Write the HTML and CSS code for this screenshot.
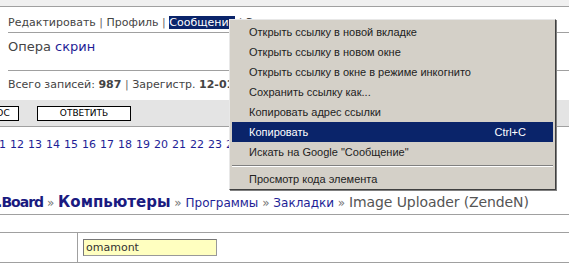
FILE: index.html
```html
<!DOCTYPE html>
<html lang="ru">
<head>
  <meta charset="UTF-8" />
  <title>Image Uploader (ZendeN)</title>
  <link rel="stylesheet" href="styles.css">
</head>
<body>
  <div class="topbar"></div>

  <div class="nav">
    <a href="#">Редактировать</a> <span class="sep">|</span>
    <a href="#">Профиль</a> <span class="sep">|</span>
    <a href="#" class="selected">Сообщения</a> <span class="sep">|</span>
    <a href="#">Закладки</a>
  </div>

  <div class="title">Опера <a href="#">скрин</a></div>

  <div class="stats">Всего записей: <b>987</b> <span class="sep">|</span> Зарегистр. <b>12-01-2008</b></div>

  <div class="toolbar">
    <button class="btn btn-new">НОВЫЙ ВОПРОС</button>
    <button class="btn btn-reply">ОТВЕТИТЬ</button>
  </div>

  <div class="pages">
    <a href="#">11</a> <a href="#">12</a> <a href="#">13</a> <a href="#">14</a> <a href="#">15</a>
    <a href="#">16</a> <a href="#">17</a> <a href="#">18</a> <a href="#">19</a> <a href="#">20</a>
    <a href="#">21</a> <a href="#">22</a> <a href="#">23</a> <a href="#">24</a>
  </div>

  <div class="crumbs">
    <a href="#" class="strong home">Forum.Board</a> <span class="raquo">»</span>
    <a href="#" class="strong">Компьютеры</a> <span class="raquo">»</span>
    <a href="#">Программы</a> <span class="raquo">»</span>
    <a href="#">Закладки</a> <span class="raquo">»</span>
    <span class="current">Image Uploader (ZendeN)</span>
  </div>

  <div class="spacer"></div>

  <div class="form-row">
    <div class="label-cell"></div>
    <div class="input-cell"><input type="text" value="omamont"></div>
  </div>

  <!-- Контекстное меню поверх страницы -->
  <ul class="context-menu">
    <li>Открыть ссылку в новой вкладке</li>
    <li>Открыть ссылку в новом окне</li>
    <li>Открыть ссылку в окне в режиме инкогнито</li>
    <li>Сохранить ссылку как...</li>
    <li>Копировать адрес ссылки</li>
    <li class="active">Копировать <span class="hotkey">Ctrl+C</span></li>
    <li>Искать на Google "Сообщение"</li>
    <li class="divider"></li>
    <li class="last">Просмотр кода элемента</li>
  </ul>
</body>
</html>
```

FILE: styles.css
```css
body {
  margin: 0;
  font-family: "DejaVu Sans", Verdana, sans-serif;
  font-size: 11px;
  color: #444;
  background: white;
  overflow: hidden;
  width: 569px;
  height: 264px;
  position: relative;
}

a {
  color: #1e1e96;
  text-decoration: none;
}

.sep {
  color: #666;
}

/* Верхняя полоса браузера */
.topbar {
  height: 6px;
  background: #f0f0f0;
  border-bottom: 1px solid #a0a0a0;
}

.nav {
  height: 25px;
  line-height: 31px;
  margin-left: 8px;
  border-bottom: 1px solid #a0a0a0;
  white-space: nowrap;
}

.nav a {
  color: #444;
}

.nav .selected {
  background: #0a246a;
  color: white;
}

.title {
  height: 37px;
  line-height: 27px;
  margin-left: 8px;
  font-size: 13px;
  border-bottom: 1px solid #a0a0a0;
}

.stats {
  height: 29px;
  line-height: 28px;
  margin-left: 8px;
  white-space: nowrap;
}

.toolbar {
  height: 26px;
  background: #e4e4e4;
  border-bottom: 1px solid #a0a0a0;
  display: flex;
  align-items: center;
  gap: 18px;
  margin-left: -76px;
}

.btn {
  height: 15px;
  padding: 0;
  border: 1px solid black;
  background: white;
  font-family: "DejaVu Sans", Verdana, sans-serif;
  font-size: 9px;
  color: black;
}

.btn-new {
  width: 95px;
}

.btn-reply {
  width: 94px;
}

.pages {
  height: 62px;
  line-height: 36px;
  margin-left: -8px;
  word-spacing: 0.5px;
  white-space: nowrap;
}

.crumbs {
  height: 25px;
  line-height: 27px;
  font-size: 12px;
  margin-left: -48px;
  white-space: nowrap;
  border-bottom: 1px solid #a0a0a0;
}

.crumbs .strong {
  font-size: 15px;
  font-weight: bold;
  color: #1a1a80;
}

.crumbs .home {
  font-size: 14px;
  letter-spacing: -1px;
}

.crumbs .raquo {
  color: #777;
}

.crumbs .current {
  font-size: 14px;
  letter-spacing: -0.1px;
  color: #555;
}

.spacer {
  height: 17px;
  border-bottom: 1px solid #a0a0a0;
}

.form-row {
  display: flex;
  height: 29px;
  border-bottom: 1px solid #a0a0a0;
}

.label-cell {
  width: 77px;
  border-right: 1px solid #a0a0a0;
}

.input-cell {
  padding: 6px 0 0 5px;
}

.input-cell input {
  width: 128px;
  height: 13px;
  padding: 1px 2px;
  border: 1px solid #999;
  border-top-color: #777;
  border-left-color: #777;
  background: #ffffc0;
  font-family: "DejaVu Sans", Verdana, sans-serif;
  font-size: 11px;
  color: #333;
}

/* Контекстное меню */
.context-menu {
  position: absolute;
  top: 19px;
  left: 229px;
  width: 321px;
  margin: 0;
  padding: 2px 2px 1px;
  list-style: none;
  background: #d4d0c8;
  border: 1px solid #e8e8e8;
  border-right-color: #404040;
  border-bottom-color: #404040;
  box-shadow: 1px 1px 0 #808080;
  font-family: Tahoma, "Liberation Sans", sans-serif;
  font-size: 11px;
  color: #222;
}

.context-menu li {
  height: 20px;
  line-height: 20px;
  padding-left: 17px;
  display: flex;
  justify-content: space-between;
}

.context-menu li.active {
  background: #0a246a;
  color: white;
}

.context-menu .hotkey {
  padding-right: 27px;
}

.context-menu li.divider {
  height: 0;
  margin: 3px 0;
  border-top: 1px solid #808080;
  border-bottom: 1px solid white;
}

.context-menu li.last {
  height: 18px;
  line-height: 19px;
}
```
